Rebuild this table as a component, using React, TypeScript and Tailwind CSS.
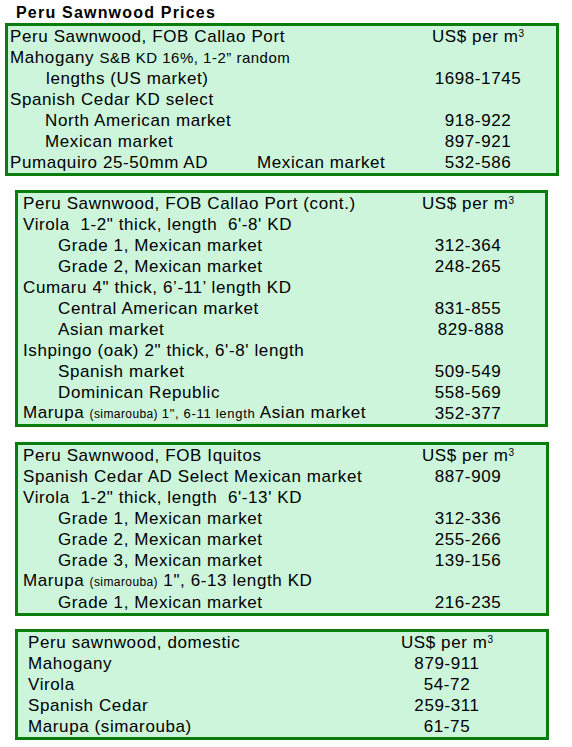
import React from "react";

type Row = { label: React.ReactNode; indent?: boolean; price?: React.ReactNode };

const Unit = () => (
  <span>
    US$ per m<sup className="text-[10px] tracking-normal">3</sup>
  </span>
);

const Small = ({ children }: { children: React.ReactNode }) => (
  <span className="text-[12px] tracking-[0.4px]">{children}</span>
);

function Box({
  rows,
  className,
  padLeft,
  indentLeft,
  priceWidth,
}: {
  rows: Row[];
  className: string;
  padLeft: string;
  indentLeft: string;
  priceWidth: string;
}) {
  return (
    <div className={`border-[3px] border-[#0a7d0a] bg-[#ccf5dc] ${className}`}>
      {rows.map((r, i) => (
        <div key={i} className="flex h-[21px] items-center leading-[21px] whitespace-pre">
          <div className={`flex-1 ${r.indent ? indentLeft : padLeft}`}>{r.label}</div>
          <div className={`${priceWidth} text-center`}>{r.price}</div>
        </div>
      ))}
    </div>
  );
}

export default function App() {
  const box1: Row[] = [
    { label: "Peru Sawnwood, FOB Callao Port", price: <Unit /> },
    {
      label: (
        <>
          Mahogany <span className="text-[15px] tracking-[0.5px]">S&amp;B KD 16%, 1-2” random</span>
        </>
      ),
    },
    { label: <span className="pl-[1px]">lengths (US market)</span>, indent: true, price: "1698-1745" },
    { label: "Spanish Cedar KD select" },
    { label: "North American market", indent: true, price: "918-922" },
    { label: "Mexican market", indent: true, price: "897-921" },
    {
      label: (
        <div className="flex">
          <span className="w-[247px]">Pumaquiro 25-50mm AD</span>
          <span>Mexican market</span>
        </div>
      ),
      price: "532-586",
    },
  ];

  const box2: Row[] = [
    { label: "Peru Sawnwood, FOB Callao Port (cont.)", price: <Unit /> },
    { label: "Virola  1-2\" thick, length  6'-8' KD" },
    { label: "Grade 1, Mexican market", indent: true, price: "312-364" },
    { label: "Grade 2, Mexican market", indent: true, price: "248-265" },
    { label: "Cumaru 4\" thick, 6’-11’ length KD" },
    { label: "Central American market", indent: true, price: "831-855" },
    { label: "Asian market", indent: true, price: <span className="pl-[6px]">829-888</span> },
    { label: "Ishpingo (oak) 2\" thick, 6'-8' length" },
    { label: "Spanish market", indent: true, price: "509-549" },
    { label: "Dominican Republic", indent: true, price: "558-569" },
    {
      label: (
        <>
          Marupa <Small>(simarouba) </Small>
          <span className="text-[13px] tracking-[0.7px]">1", 6-11 length</span> Asian market
        </>
      ),
      price: "352-377",
    },
  ];

  const box3: Row[] = [
    { label: "Peru Sawnwood, FOB Iquitos", price: <Unit /> },
    { label: "Spanish Cedar AD Select Mexican market", price: "887-909" },
    { label: "Virola  1-2\" thick, length  6'-13' KD" },
    { label: "Grade 1, Mexican market", indent: true, price: "312-336" },
    { label: "Grade 2, Mexican market", indent: true, price: "255-266" },
    { label: "Grade 3, Mexican market", indent: true, price: "139-156" },
    {
      label: (
        <>
          Marupa <Small>(simarouba)</Small> 1", 6-13 length KD
        </>
      ),
    },
    { label: "Grade 1, Mexican market", indent: true, price: "216-235" },
  ];

  const box4: Row[] = [
    { label: "Peru sawnwood, domestic", price: <Unit /> },
    { label: "Mahogany", price: "879-911" },
    { label: "Virola", price: "54-72" },
    { label: "Spanish Cedar", price: "259-311" },
    { label: "Marupa (simarouba)", price: "61-75" },
  ];

  return (
    <div
      className="w-[572px] min-h-[747px] bg-white text-black text-[17px] tracking-[0.6px]"
      style={{ fontFamily: '"Liberation Sans", Arial, sans-serif' }}
    >
      <div className="h-[23px] pl-[16px] pt-[2px] text-[16px] font-bold leading-[21px] tracking-[1.2px]">
        Peru Sawnwood Prices
      </div>
      <Box
        rows={box1}
        className="ml-[5px] w-[554px]"
        padLeft="pl-[2px]"
        indentLeft="pl-[37px]"
        priceWidth="w-[156px]"
      />
      <Box
        rows={box2}
        className="ml-[15px] mt-[14px] w-[533px]"
        padLeft="pl-[5px]"
        indentLeft="pl-[40px]"
        priceWidth="w-[154px]"
      />
      <Box
        rows={box3}
        className="ml-[15px] mt-[15px] w-[534px]"
        padLeft="pl-[5px]"
        indentLeft="pl-[40px]"
        priceWidth="w-[156px]"
      />
      <Box
        rows={box4}
        className="ml-[15px] mt-[13px] w-[534px]"
        padLeft="pl-[10px]"
        indentLeft="pl-[10px]"
        priceWidth="w-[198px]"
      />
    </div>
  );
}
